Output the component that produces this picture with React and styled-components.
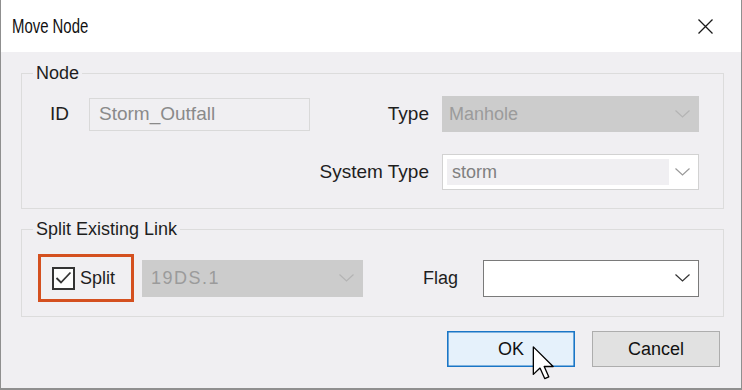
import React from "react";
import styled, { createGlobalStyle } from "styled-components";

// ————— colours —————
const C = {
  client: "#f0eff2",
  frame: "#8f8f8f",
  groupLine: "#dcdcdc",
  text: "#1e1e1e",
  dim: "#8a8a8a",
  disabledBg: "#cccccc",
  highlight: "#d4501f",
  okBorder: "#1a76c6",
  okBg: "#e5f1fb",
};

const GlobalStyle = createGlobalStyle`
  html, body, #root {
    margin: 0;
    padding: 0;
    background: #ffffff;
  }
  body {
    font-family: "Liberation Sans", Arial, sans-serif;
    color: ${C.text};
  }
  * {
    box-sizing: border-box;
  }
`;

const Window = styled.div`
  width: 742px;
  height: 390px;
  display: flex;
  flex-direction: column;
  border-left: 1px solid ${C.frame};
  border-right: 1px solid ${C.frame};
  border-bottom: 2px solid ${C.frame};
  background: ${C.client};
`;

const TitleBar = styled.div`
  height: 52px;
  flex: none;
  display: flex;
  align-items: center;
  justify-content: space-between;
  padding: 0 28px 0 11px;
  background: #ffffff;
`;

// the caption font is narrower than anything installed, so squeeze it
const Title = styled.span`
  font-size: 21px;
  display: inline-block;
  transform: scaleX(0.71);
  transform-origin: left center;
  color: #111;
`;

const CloseIcon = () => (
  <svg width="15" height="15" viewBox="0 0 15 15">
    <path d="M0.5 0.5 L14.5 14.5 M14.5 0.5 L0.5 14.5" stroke="#1a1a1a" strokeWidth="1.3" />
  </svg>
);

const Client = styled.div`
  flex: 1;
  display: flex;
  flex-direction: column;
  padding: 11px 17px 0 20px;
`;

const Group = styled.fieldset`
  margin: ${({ $gap }) => $gap || 0}px 0 0 0;
  padding: 0;
  min-width: 0;
  border: 1px solid ${C.groupLine};
`;

const Legend = styled.legend`
  margin-left: 11px;
  padding: 0 3px;
  font-size: 18px;
  line-height: 20px;
  color: ${C.text};
`;

const NodeGrid = styled.div`
  display: grid;
  grid-template-columns: 39px 221px 1fr 257px;
  grid-auto-rows: 36px;
  row-gap: 22px;
  align-items: center;
  padding: 13px 24px 18px 28px;
`;

const Label = styled.span`
  font-size: ${({ $size }) => $size || 19}px;
  color: ${C.text};
  text-align: ${({ $right }) => ($right ? "right" : "left")};
  padding-right: ${({ $right }) => ($right ? 13 : 0)}px;
  margin-right: ${({ $mr }) => $mr || 0}px;
  grid-column: ${({ $col }) => $col || "auto"};
`;

const TextBox = styled.div`
  height: 33px;
  display: flex;
  align-items: center;
  padding-left: 9px;
  border: 1px solid #d9d9d9;
  background: ${C.client};
  color: ${C.dim};
  font-size: 19px;
`;

const ComboShell = styled.div`
  height: ${({ $h }) => $h || 36}px;
  width: ${({ $w }) => ($w ? `${$w}px` : "auto")};
  margin-left: ${({ $ml }) => $ml || 0}px;
  display: flex;
  align-items: center;
  gap: 6px;
  padding: ${({ $variant }) => ($variant === "readonly" ? "4px" : "0")} 8px
    ${({ $variant }) => ($variant === "readonly" ? "4px" : "0")}
    ${({ $variant }) => ($variant === "readonly" ? "4px" : "6px")};
  border: 1px solid
    ${({ $variant }) =>
      $variant === "disabled" ? C.disabledBg : $variant === "readonly" ? "#d2d2d2" : "#7a7a7a"};
  background: ${({ $variant }) => ($variant === "disabled" ? C.disabledBg : "#ffffff")};
  grid-column: ${({ $col }) => $col || "auto"};
`;

const ComboValue = styled.div`
  flex: 1;
  align-self: stretch;
  display: flex;
  align-items: center;
  padding-left: ${({ $pl }) => $pl || 0}px;
  font-size: 18px;
  letter-spacing: ${({ $ls }) => $ls || 0}px;
  color: ${({ $muted }) => ($muted ? "#9b9b9b" : "#808080")};
  background: ${({ $filled }) => ($filled ? "#f0eff2" : "transparent")};
`;

const Chevron = ({ color }) => (
  <svg width="15" height="8" viewBox="0 0 15 8">
    <polyline points="0.5,0.5 7.5,7 14.5,0.5" fill="none" stroke={color} strokeWidth="1.2" />
  </svg>
);

const Combo = ({ value, variant, chevron, ...rest }) => (
  <ComboShell $variant={variant} {...rest}>
    <ComboValue
      $filled={variant === "readonly"}
      $muted={variant === "disabled"}
      $pl={variant === "readonly" ? 5 : rest.$vpl || 0}
      $ls={rest.$ls}
    >
      {value}
    </ComboValue>
    <Chevron color={chevron} />
  </ComboShell>
);

const SplitRow = styled.div`
  display: flex;
  align-items: center;
  padding: 15px 24px 14px 16px;
`;

const Highlight = styled.label`
  width: 96px;
  height: 48px;
  flex: none;
  display: flex;
  align-items: center;
  gap: 5px;
  padding-left: 11px;
  border: 3px solid ${C.highlight};
  font-size: 18px;
`;

const CheckBox = styled.span`
  width: 23px;
  height: 23px;
  display: flex;
  align-items: center;
  justify-content: center;
  border: 2px solid #333;
  background: #fdfdfd;
`;

const Spacer = styled.div`
  flex: 1;
`;

const ButtonRow = styled.div`
  display: flex;
  justify-content: flex-end;
  gap: 17px;
  margin: 14px 4px 0 0;
`;

const Button = styled.div`
  position: relative;
  width: 128px;
  height: 36px;
  display: flex;
  align-items: center;
  justify-content: center;
  font-size: 18px;
  color: #111;
  border: 1px solid ${({ $primary }) => ($primary ? C.okBorder : "#adadad")};
  background: ${({ $primary }) => ($primary ? C.okBg : "#e1e1e1")};
  box-shadow: ${({ $primary }) => ($primary ? `inset 0 0 0 0.6px ${C.okBorder}` : "none")};
`;

const Pointer = styled.svg`
  position: absolute;
  left: 84px;
  top: 14px;
`;

export default function App() {
  return (
    <>
      <GlobalStyle />
      <Window>
        <TitleBar>
          <Title>Move Node</Title>
          <CloseIcon />
        </TitleBar>

        <Client>
          <Group>
            <Legend>Node</Legend>
            <NodeGrid>
              <Label>ID</Label>
              <TextBox>Storm_Outfall</TextBox>
              <Label $right>Type</Label>
              <Combo value="Manhole" variant="disabled" chevron="#b4b4b4" />

              <Label $right $col="3">System Type</Label>
              <Combo value="storm" variant="readonly" chevron="#9a9a9a" $col="4" />
            </NodeGrid>
          </Group>

          <Group $gap={10}>
            <Legend>Split Existing Link</Legend>
            <SplitRow>
              <Highlight>
                <CheckBox>
                  <svg width="17" height="14" viewBox="0 0 17 14">
                    <polyline points="1.5,7 6,11.5 15.5,1.5" fill="none" stroke="#333" strokeWidth="1.8" />
                  </svg>
                </CheckBox>
                Split
              </Highlight>
              <Combo
                value="19DS.1"
                variant="disabled"
                chevron="#b4b4b4"
                $w={221}
                $h={37}
                $ml={8}
                $vpl={2}
                $ls={1.5}
              />
              <Spacer />
              <Label $size={18} $mr={25}>Flag</Label>
              <Combo value="" variant="normal" chevron="#333" $w={216} $h={37} />
            </SplitRow>
          </Group>

          <ButtonRow>
            <Button $primary>
              OK
              <Pointer width="23" height="34" viewBox="0 0 12.6 19.4">
                <path
                  d="M0.5 0.5 L0.5 16.2 L4.3 12.6 L7 18.6 L9.3 17.6 L6.7 11.7 L11.8 11.7 Z"
                  fill="#ffffff"
                  stroke="#000"
                  strokeWidth="0.75"
                  strokeLinejoin="round"
                />
              </Pointer>
            </Button>
            <Button>Cancel</Button>
          </ButtonRow>
        </Client>
      </Window>
    </>
  );
}
